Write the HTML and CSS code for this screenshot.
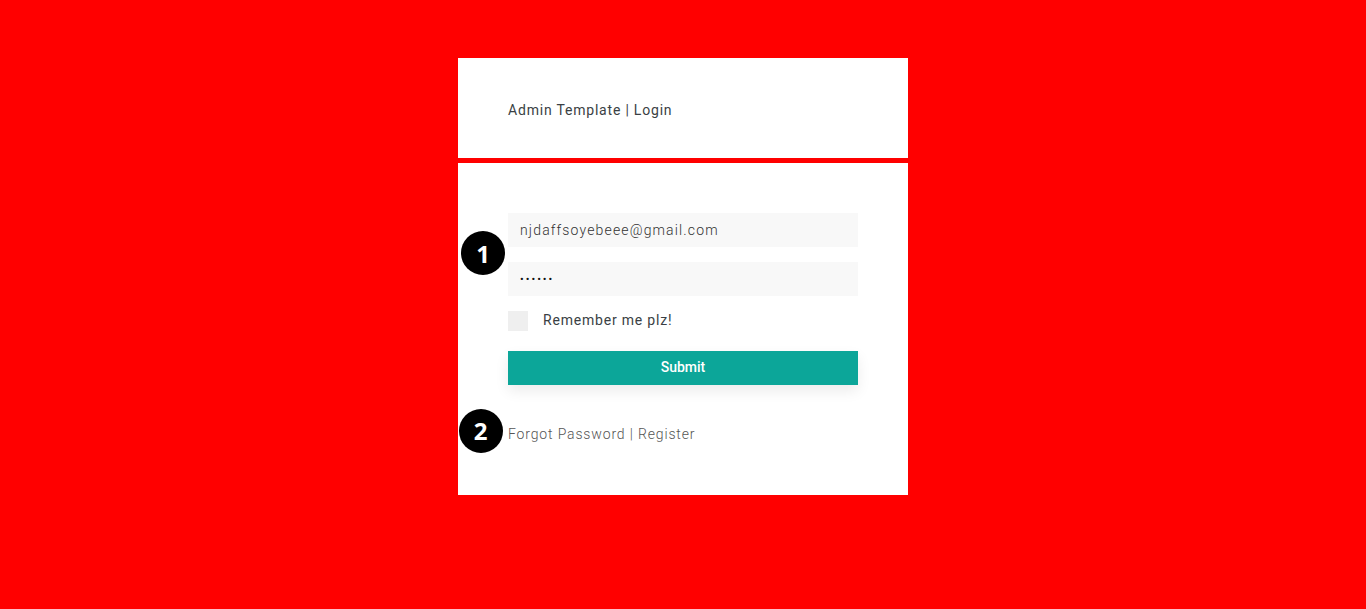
FILE: index.html
```html
<!DOCTYPE html>
<html>
<head>
<meta charset="utf-8">
<link rel="stylesheet" href="styles.css">
</head>
<body>
<div class="page">
  <div class="wrap">
    <div class="card header">
      <div class="title">Admin Template | Login</div>
    </div>
    <div class="card body">
      <form class="form">
        <div class="fields">
          <span class="badge badge-1">1</span>
          <div class="input">njdaffsoyebeee@gmail.com</div>
          <div class="input pw">••••••</div>
        </div>
        <label class="remember"><span class="check"></span><span class="remember-text">Remember me plz!</span></label>
        <div class="submit">Submit</div>
      </form>
      <div class="links">
        <span class="badge badge-2">2</span>
        Forgot Password | Register
      </div>
    </div>
  </div>
</div>
</body>
</html>
```
FILE: styles.css
```css
html, body {
  margin: 0;
  padding: 0;
  background: #ff0000;
  font-family: Roboto, "Liberation Sans", sans-serif;
}
.page {
  display: flex;
  justify-content: center;
  padding-top: 58px;
}
.wrap {
  width: 450px;
  display: flex;
  flex-direction: column;
  gap: 5px;
}
.card {
  background: #fff;
  padding: 0 50px;
}
.header {
  height: 100px;
  display: flex;
  align-items: center;
}
.title {
  font-size: 14px;
  letter-spacing: 0.8px;
  color: #3a3f44;
  padding-top: 4px;
}
.body {
  padding-top: 50px;
  padding-bottom: 53px;
  position: relative;
}
.form {
  display: flex;
  flex-direction: column;
}
.fields {
  display: flex;
  flex-direction: column;
  gap: 15px;
  position: relative;
}
.input {
  height: 34px;
  background: #f8f8f8;
  padding: 0 12px;
  display: flex;
  align-items: center;
  font-size: 14px;
  font-weight: 300;
  letter-spacing: 1.15px;
  color: #333;
}
.pw {
  font-size: 11px;
  letter-spacing: 2px;
  color: #111;
  font-weight: 400;
}
.remember {
  display: flex;
  align-items: center;
  gap: 15px;
  margin-top: 15px;
  font-size: 14px;
  letter-spacing: 0.8px;
  color: #3a3f44;
}
.remember-text {
  padding-bottom: 2px;
}
.check {
  width: 20px;
  height: 20px;
  background: #efefef;
}
.submit {
  margin-top: 20px;
  height: 34px;
  padding-bottom: 2px;
  box-sizing: border-box;
  background: #0ca699;
  color: #fff;
  font-size: 14px;
  font-weight: 500;
  display: flex;
  align-items: center;
  justify-content: center;
  box-shadow: 0 6px 14px rgba(0,0,0,0.08);
}
.links {
  margin-top: 41px;
  font-size: 14px;
  font-weight: 300;
  letter-spacing: 0.85px;
  color: #555;
  position: relative;
  line-height: 16px;
}
.badge {
  position: absolute;
  width: 44px;
  height: 44px;
  border-radius: 50%;
  background: #000;
  color: #fff;
  font-weight: 700;
  font-size: 24px;
  display: flex;
  align-items: center;
  justify-content: center;
  font-family: "Open Sans", Roboto, sans-serif;
}
.badge-1 {
  left: -47px;
  top: 18px;
}
.badge-2 {
  left: -49px;
  top: -17px;
}
```
